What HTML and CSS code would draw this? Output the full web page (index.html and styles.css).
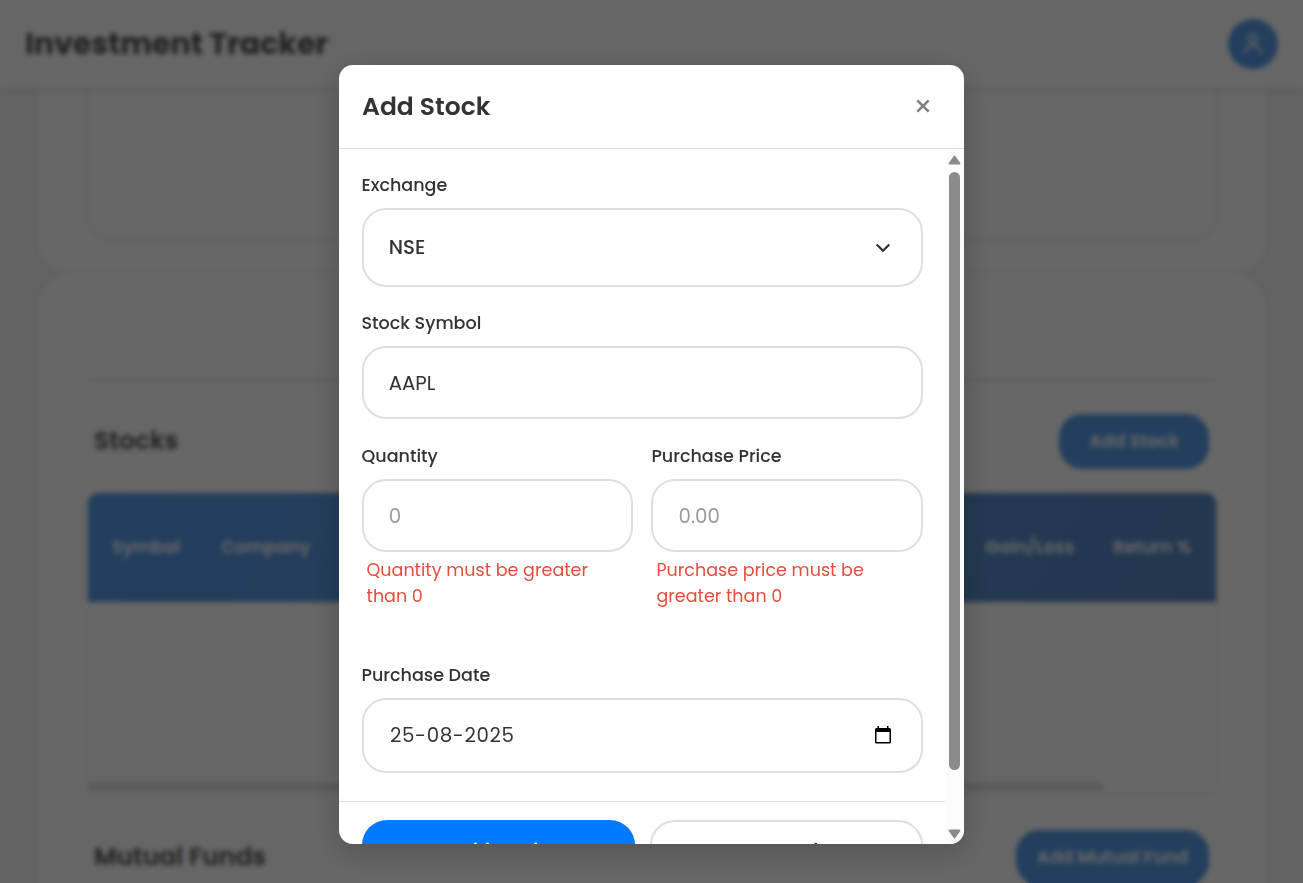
FILE: index.html
```
<!DOCTYPE html>
<html lang="en">
<head>
<meta charset="utf-8">
<title>Investment Tracker</title>
<link rel="stylesheet" href="styles.css">
</head>
<body>
<div class="page">
  <header class="topbar">
    <h1 class="brand">Investment Tracker</h1>
    <div class="avatar">
      <svg width="24" height="24" viewBox="0 0 24 24" fill="none" stroke="#fff" stroke-width="2"><circle cx="12" cy="7" r="4.200"/><path d="M3.500 21.500c1-5 4.500-8.500 8.500-8.500s7.500 3.500 8.500 8.500"/></svg>
    </div>
  </header>
  <main class="content">
    <section class="card card-chart"><div class="chart-box"></div></section>
    <section class="card card-holdings">
      <div class="card-head"></div>
      <div class="row">
        <h2 class="section-title">Stocks</h2>
        <button class="action act-stock">Add Stock</button>
      </div>
      <div class="table-wrap">
        <div class="thead">
          <span>Symbol</span><span>Company</span><span>Gain/Loss</span><span>Return %</span>
        </div>
        <div class="tbody"></div>
        <div class="hbar"></div>
      </div>
      <div class="row row-funds">
        <h2 class="section-title">Mutual Funds</h2>
        <button class="action act-fund">Add Mutual Fund</button>
      </div>
    </section>
  </main>
</div>
<div class="overlay">
  <div class="modal" role="dialog" aria-label="Add Stock">
    <div class="modal-head">
      <h3 class="modal-title">Add Stock</h3>
      <button class="close" aria-label="Close"><svg width="14" height="14" viewBox="0 0 14 14"><path d="M1.300 1.300 12.700 12.700M12.700 1.300 1.300 12.700" stroke="#808080" stroke-width="2.600"/></svg></button>
    </div>
    <div class="modal-main">
      <div class="form">
        <div class="fields">
          <div class="label">Exchange</div>
          <div class="field select"><span>NSE</span>
            <svg width="16" height="10" viewBox="0 0 16 10" fill="none" stroke="#333" stroke-width="2.200"><path d="M1.700 1.500 8 7.800 14.300 1.500"/></svg></div>
          <div class="label">Stock Symbol</div>
          <div class="field"><span>AAPL</span></div>
          <div class="pair">
            <div class="col">
              <div class="label">Quantity</div>
              <div class="field ph"><span>0</span></div>
              <p class="error">Quantity must be greater<br>than 0</p>
            </div>
            <div class="col col-price">
              <div class="label">Purchase Price</div>
              <div class="field ph"><span>0.00</span></div>
              <p class="error">Purchase price must be<br>greater than 0</p>
            </div>
          </div>
          <div class="label">Purchase Date</div>
          <div class="field date"><span>25-08-2025</span>
            <svg width="16" height="18" viewBox="0 0 16 18"><path d="M2.500 0h1.500v2h8V0h1.500v2H14.500Q16 2 16 3.500V16q0 1.500-1.500 1.500h-13Q0 17.500 0 16V3.500Q0 2 1.500 2h1zM1.500 6v10h13V6z" fill="#000" fill-rule="evenodd"/></svg></div>
        </div>
        <div class="modal-foot">
          <button class="btn primary">Add Stock</button>
          <button class="btn secondary">Cancel</button>
        </div>
      </div>
      <div class="scrollbar">
        <svg width="13" height="10" viewBox="0 0 13 10"><path d="M6.500 1.500 11.500 8.500h-10z" fill="#8b8b8b" stroke="#8b8b8b" stroke-width="1.800" stroke-linejoin="round"/></svg>
        <div class="thumb"></div>
        <svg width="13" height="10" viewBox="0 0 13 10"><path d="M6.500 8.500 11.500 1.500h-10z" fill="#8b8b8b" stroke="#8b8b8b" stroke-width="1.800" stroke-linejoin="round"/></svg>
      </div>
    </div>
  </div>
</div>
</body>
</html>
```
FILE: styles.css
```
* { box-sizing: border-box; margin: 0; padding: 0; }
body { width: 1303px; height: 883px; overflow: hidden; background: #f8f8f8; color: #333; font-family: Poppins, Inter, sans-serif; }
button { font: inherit; border: 0; background: none; }
h1, h2, h3, span, .label, .error { white-space: nowrap; }

.page { height: 883px; overflow: hidden; color: #555; }
.topbar { position: absolute; inset: 0 0 auto; z-index: 2; height: 88px; padding: 0 25px; display: flex; align-items: center; justify-content: space-between; background: rgba(255,255,255,.95); box-shadow: 0 2px 8px rgba(0,0,0,.1); }
.brand { font-size: 30px; font-weight: 700; }
.avatar { width: 50px; height: 50px; border-radius: 50%; background: #589dec; display: flex; align-items: center; justify-content: center; }
.content { padding: 0 37px 0 38px; }
.card { background: #fff; border-radius: 32px; box-shadow: 0 0 6px rgba(0,0,0,.08); }
.card-chart { height: 273px; border-radius: 0 0 32px 32px; padding: 9px 48px 0; }
.chart-box { height: 231px; border: 2px solid #f4f4f4; border-radius: 28px; box-shadow: 0 1px 5px rgba(0,0,0,.07); }
.card-holdings { height: 680px; padding: 0 50px; }
.card-head { height: 108px; border-bottom: 2px solid #e4e4e4; }
.row { height: 112px; padding: 8px 7px 0 6px; display: flex; align-items: center; justify-content: space-between; }
.section-title { font-size: 25px; font-weight: 600; }
.action { height: 55px; border-radius: 23px; background: #589dec; color: #fff; font-size: 17.500px; font-weight: 600; }
.act-stock { width: 150px; }
.act-fund { width: 193px; }
.table-wrap { height: 300px; border-radius: 10px; overflow: hidden; box-shadow: 0 1px 5px rgba(0,0,0,.08); }
.thead { height: 109px; padding: 0 25px 2px 24px; display: grid; grid-template-columns: 109px 1fr 128px 78px; align-items: center; background: linear-gradient(120deg, #589dec, #5889c3); color: #fff; font-size: 17.600px; font-weight: 600; }
.tbody { height: 181px; background: #fff; }
.hbar { width: 1014px; height: 8px; background: #e2e2e2; }
.row-funds { height: 128px; padding-top: 0; }

.overlay { position: absolute; inset: 0; z-index: 5; padding: 65px 0 0 339px; background: rgba(0,0,0,.6); backdrop-filter: blur(2.500px); }
.modal { width: 625px; height: 779px; border-radius: 14px; overflow: hidden; background: #fff; box-shadow: 0 8px 32px rgba(0,0,0,.2); }
.modal-head { height: 84px; padding: 0 34px 0 23px; border-bottom: 1px solid #ddd; display: flex; align-items: center; justify-content: space-between; }
.modal-title { font-size: 25px; font-weight: 600; }
.close { display: flex; padding-bottom: 1px; }
.modal-main { height: 695px; display: flex; }
.form { width: 606px; overflow: hidden; }
.fields { height: 653px; padding: 23px 22px 0 23px; border-bottom: 1px solid #ddd; }
.label { height: 26px; margin: 0 0 10px -.5px; line-height: 26px; font-size: 17.550px; font-weight: 500; }
.field { height: 73px; margin-bottom: 24px; padding: 1px 25px 0 24.700px; border: 2px solid #dfdfdf; border-radius: 24px; display: flex; align-items: center; justify-content: space-between; font-size: 19.800px; }
.select { height: 79px; margin-bottom: 23px; padding: 0 30px 0 24.700px; font-weight: 500; }
.select span { padding-bottom: 2px; }
.pair { display: grid; grid-template-columns: 271px 272px; gap: 18px; height: 219px; }
.pair .field { margin-bottom: 5px; }
.ph { color: #999; }
.error { margin-left: 4.500px; line-height: 26px; font-size: 17.550px; color: #e74c3c; }
.col-price .label { margin-left: .4px; }
.col-price .field { padding-left: 25.500px; }
.col-price .error { margin-left: 5.400px; }
.date { height: 75px; padding: 0 30px 1px 26px; }
.date span { letter-spacing: .65px; }
.modal-foot { padding: 18px 22px 0 23px; display: grid; grid-template-columns: 273px 273px; gap: 15px; }
.btn { height: 59px; border-radius: 25px; font-size: 17.550px; font-weight: 600; }
.primary { background: #007bff; color: #fff; }
.secondary { border: 2px solid #dfdfdf; color: #333; box-shadow: 0 2px 6px rgba(0,0,0,.06); }
.scrollbar { width: 19px; padding: 6px 0 5px; display: flex; flex-direction: column; align-items: center; background: #fcfcfc; }
.thumb { width: 11px; height: 598px; margin: 7px 0 59px; border-radius: 6px; background: #8b8b8b; }
```
